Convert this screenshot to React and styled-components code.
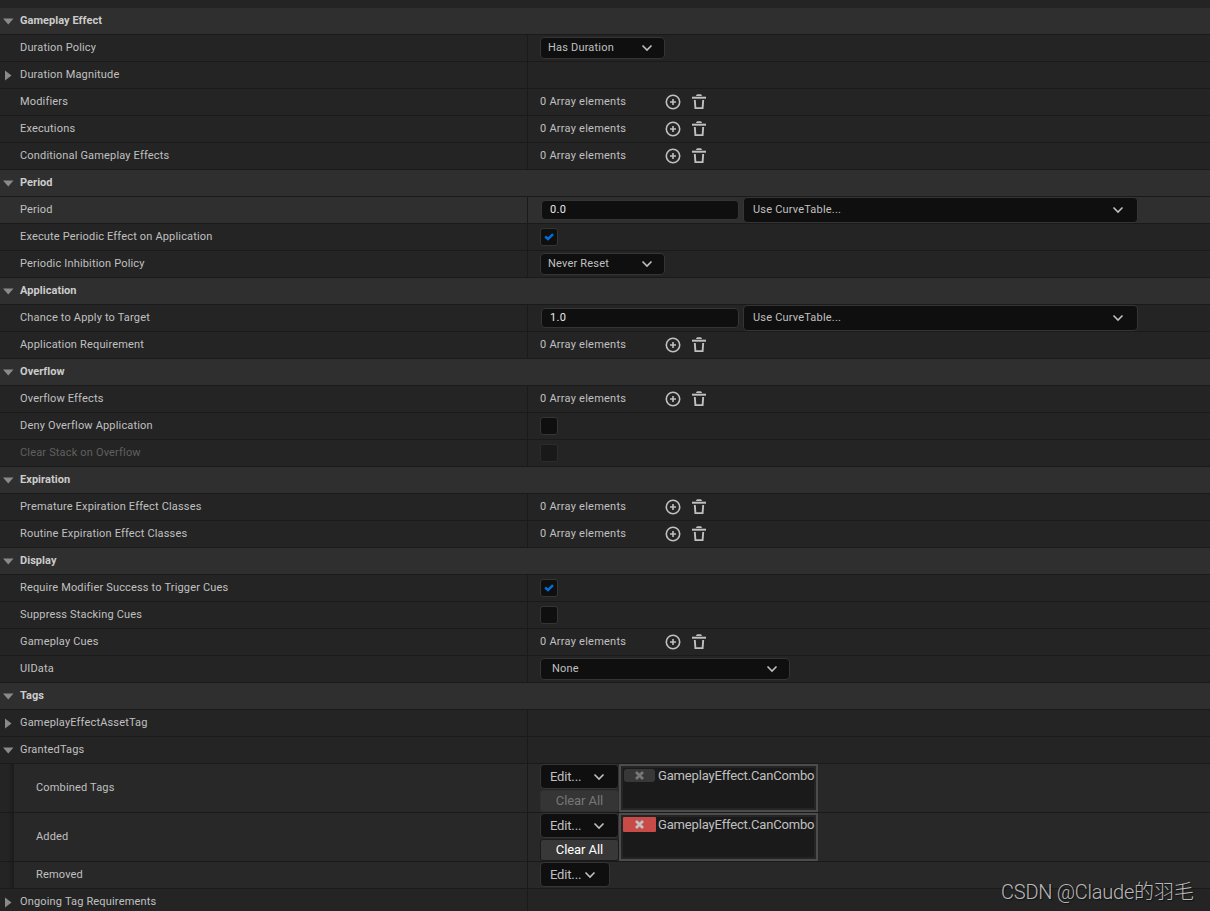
import React from "react";
import styled, { createGlobalStyle, css } from "styled-components";

const GlobalStyle = createGlobalStyle`
  *, *::before, *::after { box-sizing: border-box; }
  html, body { margin: 0; height: 100%; overflow: hidden; background: #242424; }
  body { font-family: Roboto, "Noto Sans CJK SC", sans-serif; }
  button, input { font: inherit; margin: 0; }
`;

const Panel = styled.main`
  position: relative;
  height: 911px;
  padding-top: 8px;
  overflow: hidden;
  background: #242424;
  color: #c0c0c0;
  font-size: 11px;
  letter-spacing: 0.17px;
  line-height: 13px;
`;

const Header = styled.header`
  display: flex;
  align-items: center;
  height: 27px;
  padding-bottom: 2px;
  border-bottom: 1px solid #1a1a1a;
  background: #2f2f2f;
  color: #cccccc;
  font-weight: 700;
  letter-spacing: 0.05px;
`;

const Row = styled.div`
  display: flex;
  height: ${(p) => p.$height || 27}px;
  border-bottom: 1px solid #1a1a1a;
  background: ${(p) => (p.$hover ? "#2f2f2f" : p.$nested ? "#282828" : "#242424")};
`;

const NameCell = styled.div`
  display: flex;
  align-items: center;
  flex: 0 0 528px;
  padding-bottom: 1px;
  border-right: 1px solid #1a1a1a;
  color: ${(p) => (p.$disabled ? "#606060" : "#c0c0c0")};
`;

const Gutter = styled.span`
  display: flex;
  align-items: center;
  width: 20px;
  padding: ${(p) => p.$top}px 0 0 3px;
`;

const Indent = styled.span`
  align-self: stretch;
  width: 14px;
  margin: 0 22px -1px 0;
  background: linear-gradient(90deg, #242424 0, #242424 8px, #1b1b1b 14px);
`;

const ValueCell = styled.div`
  display: flex;
  align-items: ${(p) => (p.$top ? "flex-start" : "center")};
  padding-left: ${(p) => (p.$pad ?? 12)}px;
`;

const field = css`
  border: 1px solid #353535;
  border-radius: 4px;
  background: #0f0f0f;
  color: #c0c0c0;
`;

const Combo = styled.button`
  ${field}
  display: flex;
  align-items: center;
  justify-content: space-between;
  width: ${(p) => p.$width}px;
  height: ${(p) => p.$height || 22}px;
  padding: 0 ${(p) => p.$end || 11}px 0 ${(p) => p.$start || 7}px;
  font-size: 11px;
  letter-spacing: 0.19px;
  line-height: 13px;
  text-align: left;

  span { margin-bottom: 2px; }
`;

const NumberInput = styled.input`
  ${field}
  width: 198px;
  height: 20px;
  margin-right: 4px;
  padding: 0 8px 1px;
  color: #e8e8e8;
  letter-spacing: 0.3px;
`;

const Check = styled.span`
  ${field}
  display: grid;
  place-items: center;
  width: 18px;
  height: 18px;
  border-radius: 3px;
  opacity: ${(p) => (p.$disabled ? 0.5 : 1)};
`;

const ArrayCount = styled.span`
  width: 125px;
  padding-bottom: 1px;
  letter-spacing: 0.24px;
`;

const IconButton = styled.button`
  display: flex;
  width: 16px;
  height: 16px;
  margin: 0 10px 0 0;
  padding: 0;
  border: 0;
  background: none;
  color: #c0c0c0;
`;

const TagActions = styled.div`
  display: flex;
  flex-direction: column;
  gap: 1px;
  width: 79px;
`;

const EditButton = styled.button`
  ${field}
  display: flex;
  align-items: center;
  justify-content: space-between;
  width: ${(p) => p.$width}px;
  height: 25px;
  padding: 0 13px 0 9px;
  font-size: 13px;
  letter-spacing: -0.16px;
  line-height: 15px;
`;

const ClearButton = styled.button`
  height: 22px;
  padding: 0 0 1px;
  border: 1px solid ${(p) => (p.disabled ? "#303030" : "#1a1a1a")};
  border-radius: 3px;
  background: ${(p) => (p.disabled ? "#353535" : "#383838")};
  color: ${(p) => (p.disabled ? "#777777" : "#ffffff")};
  font-size: 13px;
  letter-spacing: -0.08px;
  line-height: 15px;
`;

const TagBox = styled.div`
  width: 199px;
  height: 48px;
  padding: 2px;
  border: 2px solid #4c4c4c;
  background: #242424;
`;

const TagList = styled.div`
  display: flex;
  align-items: flex-start;
  height: 40px;
  background: #1a1a1a;
  font-size: 13px;
  letter-spacing: -0.16px;
  line-height: 15px;
  white-space: nowrap;
`;

const RemoveTag = styled.button`
  display: grid;
  place-items: center;
  flex: 0 0 ${(p) => (p.disabled ? 31 : 33)}px;
  height: ${(p) => (p.disabled ? 13 : 15)}px;
  margin: ${(p) => (p.disabled ? "1px 3px 0 1px" : "0 2px 0 0")};
  padding: 0;
  border: 0;
  border-radius: ${(p) => (p.disabled ? 3 : 1)}px;
  background: ${(p) => (p.disabled ? "#383838" : "#c84b48")};
  color: ${(p) => (p.disabled ? "#777777" : "#c0c0c0")};
`;

const Watermark = styled.div`
  position: absolute;
  right: 16px;
  bottom: 5px;
  color: #b8b8b8;
  font-family: "Noto Sans CJK SC", sans-serif;
  font-size: 20px;
  font-weight: 300;
  letter-spacing: 0;
  line-height: 28px;
  text-shadow: 1px 1px 1px #111;
  white-space: nowrap;
`;

const Latin = styled.span`
  font-family: Roboto, sans-serif;
  letter-spacing: -0.25px;
`;

const Chevron = () => (
  <svg width="12" height="8" viewBox="0 0 12 8" fill="none" stroke="#c0c0c0" strokeWidth="1.6">
    <path d="M1.5 1.5 6 6 10.5 1.5" />
  </svg>
);

const Arrow = ({ open }) => (
  <svg width="11" height="11" viewBox="0 0 11 11" fill="#8a8a8a">
    <path d={open ? "M0 2.5H10.5L5.25 8.5Z" : "M2 .5V10.5L8.5 5.5Z"} />
  </svg>
);

const Tick = () => (
  <svg width="10" height="8" viewBox="0 0 10 8" fill="none" stroke="#0070e0" strokeWidth="2.4">
    <path d="M1.2 3.5 4 6 9 1.2" />
  </svg>
);

const Plus = () => (
  <svg width="16" height="16" viewBox="0 0 16 16" fill="none" stroke="currentColor" strokeWidth="1.6">
    <circle cx="8" cy="8" r="6.7" />
    <path d="M8 5V11M5 8H11" />
  </svg>
);

const Trash = () => (
  <svg width="16" height="16" viewBox="0 0 16 16" fill="currentColor">
    <path d="M5 2Q5.2 .2 6.5 .2H9.5Q10.8 .2 11 2Z" />
    <path d="M1 2.7H15V4.7H1Z" />
    <path d="M3.8 6 4.4 14.1H11.6L12.2 6" fill="none" stroke="currentColor" strokeWidth="1.9" />
  </svg>
);

const Cross = () => (
  <svg width="9" height="9" viewBox="0 0 9 9" stroke="currentColor" strokeWidth="2.8">
    <path d="M1 1 8 8M8 1 1 8" />
  </svg>
);

const Category = ({ children }) => (
  <Header>
    <Gutter $top={3}><Arrow open /></Gutter>
    {children}
  </Header>
);

const Property = ({ name, arrow, disabled, hover, pad, children }) => (
  <Row $hover={hover}>
    <NameCell $disabled={disabled}>
      <Gutter $top={1}>{arrow && <Arrow open={arrow === "open"} />}</Gutter>
      {name}
    </NameCell>
    <ValueCell $pad={pad}>{children}</ValueCell>
  </Row>
);

const ArrayProperty = ({ name }) => (
  <Property name={name}>
    <ArrayCount>0 Array elements</ArrayCount>
    <IconButton><Plus /></IconButton>
    <IconButton><Trash /></IconButton>
  </Property>
);

const SelectProperty = ({ name, value, ...size }) => (
  <Property name={name}>
    <Combo {...size}><span>{value}</span><Chevron /></Combo>
  </Property>
);

const CheckProperty = ({ name, checked, disabled }) => (
  <Property name={name} disabled={disabled}>
    <Check $disabled={disabled}>{checked && <Tick />}</Check>
  </Property>
);

const CurveProperty = ({ name, value, hover }) => (
  <Property name={name} hover={hover} pad={13}>
    <NumberInput defaultValue={value} />
    <Combo $width={395} $height={26} $start={9} $end={13}><span>Use CurveTable...</span><Chevron /></Combo>
  </Property>
);

const TagProperty = ({ name, inherited }) => (
  <Row $nested $height={49}>
    <NameCell><Indent />{name}</NameCell>
    <ValueCell $top>
      <TagActions>
        <EditButton $width={79}>Edit...<Chevron /></EditButton>
        <ClearButton disabled={inherited}>Clear All</ClearButton>
      </TagActions>
      <TagBox>
        <TagList>
          <RemoveTag disabled={inherited}><Cross /></RemoveTag>
          GameplayEffect.CanCombo
        </TagList>
      </TagBox>
    </ValueCell>
  </Row>
);

export default function App() {
  return (
    <>
      <GlobalStyle />
      <Panel>
        <Category>Gameplay Effect</Category>
        <SelectProperty name="Duration Policy" value="Has Duration" $width={125} />
        <Property name="Duration Magnitude" arrow="closed" />
        <ArrayProperty name="Modifiers" />
        <ArrayProperty name="Executions" />
        <ArrayProperty name="Conditional Gameplay Effects" />

        <Category>Period</Category>
        <CurveProperty name="Period" value="0.0" hover />
        <CheckProperty name="Execute Periodic Effect on Application" checked />
        <SelectProperty name="Periodic Inhibition Policy" value="Never Reset" $width={125} />

        <Category>Application</Category>
        <CurveProperty name="Chance to Apply to Target" value="1.0" />
        <ArrayProperty name="Application Requirement" />

        <Category>Overflow</Category>
        <ArrayProperty name="Overflow Effects" />
        <CheckProperty name="Deny Overflow Application" />
        <CheckProperty name="Clear Stack on Overflow" disabled />

        <Category>Expiration</Category>
        <ArrayProperty name="Premature Expiration Effect Classes" />
        <ArrayProperty name="Routine Expiration Effect Classes" />

        <Category>Display</Category>
        <CheckProperty name="Require Modifier Success to Trigger Cues" checked />
        <CheckProperty name="Suppress Stacking Cues" />
        <ArrayProperty name="Gameplay Cues" />
        <SelectProperty name="UIData" value="None" $width={250} $start={11} />

        <Category>Tags</Category>
        <Property name="GameplayEffectAssetTag" arrow="closed" />
        <Property name="GrantedTags" arrow="open" />
        <TagProperty name="Combined Tags" inherited />
        <TagProperty name="Added" />
        <Row $nested>
          <NameCell><Indent />Removed</NameCell>
          <ValueCell $top>
            <EditButton $width={70}>Edit...<Chevron /></EditButton>
          </ValueCell>
        </Row>
        <Property name="Ongoing Tag Requirements" arrow="closed" />
        <Watermark><Latin>CSDN @Claude</Latin>的羽毛</Watermark>
      </Panel>
    </>
  );
}
